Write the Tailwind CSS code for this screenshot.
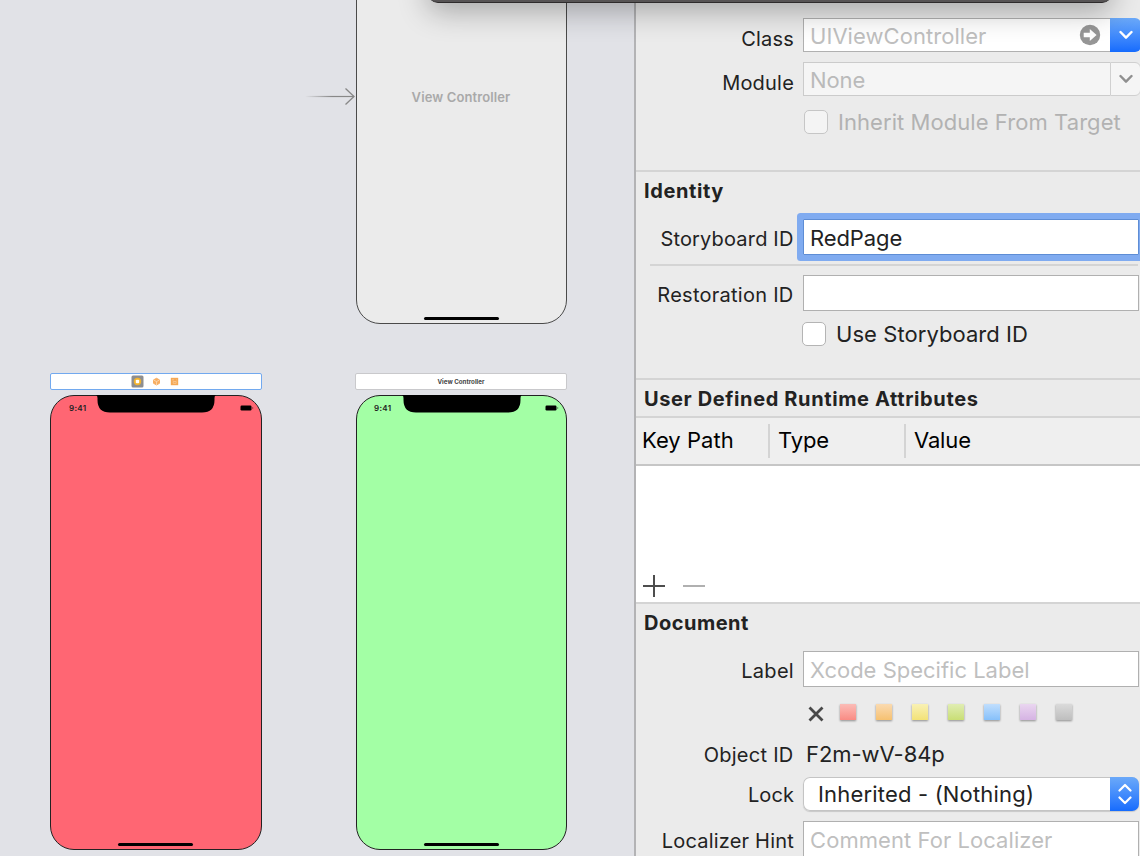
<!DOCTYPE html>
<html lang="en">
<head>
<meta charset="utf-8">
<title>Storyboard Editor</title>
<script src="https://cdn.jsdelivr.net/npm/@tailwindcss/browser@4"></script>
</head>
<body class="font-['Inter','Liberation_Sans',sans-serif] text-[#222222]">
<div class="relative flex h-[856px] w-[1140px] overflow-hidden bg-[#e1e2e7]">

  <!-- Storyboard canvas -->
  <main class="relative h-full w-[634px] shrink-0 overflow-hidden">
    <!-- Entry point arrow -->
    <svg class="absolute left-[304px] top-[86px]" width="54" height="22" viewBox="0 0 54 22" fill="none">
      <defs><linearGradient id="fade" x1="0" x2="1" y1="0" y2="0"><stop offset="0" stop-color="#888" stop-opacity="0"/><stop offset=".55" stop-color="#888"/></linearGradient></defs>
      <rect x="1" y="9.900" width="49" height="1.200" fill="url(#fade)"/>
      <path d="M41.500 2.500 50 10.500 41.500 18.500" stroke="#888" stroke-width="1.300"/>
    </svg>

    <!-- Initial scene -->
    <section class="absolute left-[356px] top-[-131px] flex h-[455px] w-[211px] flex-col items-center justify-between rounded-[24px] border border-[#4a4a4a] bg-[#ebebeb] pb-[3px]">
      <p class="mt-[218px] -ml-px text-[13px] font-semibold leading-[18px] tracking-[0.12px] text-[#a9a9a9]">View Controller</p>
      <div class="h-[3px] w-[75px] rounded-full bg-black"></div>
    </section>

    <!-- Red scene, selected -->
    <div class="absolute left-[50px] top-[373px] flex h-[17px] w-[212px] items-center justify-center gap-[5.500px] rounded-[2px] border border-[#72a9ef] bg-white">
      <svg width="13" height="13" viewBox="0 0 13 13"><rect x=".5" y=".5" width="12" height="12" rx="1.500" fill="#8d8e90"/><circle cx="6.500" cy="6.500" r="3.700" fill="#f3b32b"/><rect x="4.800" y="4.800" width="3.400" height="3.400" rx=".8" fill="#fff"/></svg>
      <svg width="13" height="13" viewBox="0 0 13 13"><path d="M6.500 3.300 9.500 4.900V8.300L6.500 9.900 3.500 8.300V4.900Z" fill="#f8ae62" stroke="#f8ae62" stroke-linejoin="round"/><path d="M3.600 5 6.500 6.600 9.400 5M6.500 6.600V10" fill="none" stroke="#fde3c4" stroke-width=".7"/></svg>
      <svg width="13" height="13" viewBox="0 0 13 13"><rect x="2.800" y="2.800" width="7.400" height="7.400" fill="#f6a956"/><path d="M4 4.800H6M8.300 4.800H9M5.200 6.500H8.200V8.300H5.200Z" fill="none" stroke="#fbd0a0" stroke-width=".7"/></svg>
    </div>
    <section class="absolute left-[50px] top-[395px] flex h-[455px] w-[211.500px] flex-col items-center justify-between rounded-[24px] border border-[#222] bg-[#ff6673] pb-[3px]">
      <header class="flex w-full items-start pl-[18px] pr-[7px]">
        <span class="mt-[7px] w-[27px] text-[8px] font-semibold leading-[11px] tracking-[0.350px]">9:41</span>
        <svg class="-mt-px" width="120" height="18" viewBox="0 0 120 18"><path d="M0 0H120Q118.500 .5 118.500 3V5Q118.500 17.500 106 17.500H14Q1.500 17.500 1.500 5V3Q1.500 .5 0 0Z" fill="#000"/></svg>
        <svg class="mt-[8px] ml-auto" width="28" height="8" viewBox="0 0 28 8"><rect x="14.500" y="1.500" width="11" height="5" rx="1.200" fill="#000"/><rect x="26.200" y="3" width="1" height="2" fill="#000" opacity=".4"/></svg>
      </header>
      <div class="-ml-px h-[3px] w-[75px] rounded-full bg-black"></div>
    </section>

    <!-- Green scene -->
    <div class="absolute left-[355px] top-[373px] flex h-[17px] w-[212px] items-center justify-center rounded-[2px] border border-[#c9c9cc] bg-white">
      <p class="text-[6.2px] font-bold leading-[8px] tracking-[0.020px] text-[#444]">View Controller</p>
    </div>
    <section class="absolute left-[356px] top-[395px] flex h-[455px] w-[211px] flex-col items-center justify-between rounded-[24px] border border-[#222] bg-[#a3ffa5] pb-[3px]">
      <header class="flex w-full items-start pl-[17px] pr-[7px]">
        <span class="mt-[7px] w-[28px] text-[8px] font-semibold leading-[11px] tracking-[0.350px]">9:41</span>
        <svg class="-mt-px" width="120" height="18" viewBox="0 0 120 18"><path d="M0 0H120Q118.500 .5 118.500 3V5Q118.500 17.500 106 17.500H14Q1.500 17.500 1.500 5V3Q1.500 .5 0 0Z" fill="#000"/></svg>
        <svg class="mt-[8px] ml-auto" width="28" height="8" viewBox="0 0 28 8"><rect x="14.500" y="1.500" width="11" height="5" rx="1.200" fill="#000"/><rect x="26.200" y="3" width="1" height="2" fill="#000" opacity=".4"/></svg>
      </header>
      <div class="h-[3px] w-[75px] rounded-full bg-black"></div>
    </section>
  </main>

  <!-- Identity inspector -->
  <aside class="flex h-full w-[506px] shrink-0 flex-col border-l-2 border-[#b3b3b5] bg-[#ebebeb] text-[22px] leading-[26px]">

    <!-- Custom class -->
    <section class="flex h-[170px] shrink-0 flex-col pt-[18px]">
      <div class="flex h-[34px] gap-[9px]">
        <label class="flex w-[158px] shrink-0 items-center justify-end pt-[7px] text-[20px] tracking-[0.2px]">Class</label>
        <div class="flex w-[307px] shrink-0 items-center justify-between border border-r-0 border-[#b0b0b0] bg-white pl-[6px] pr-[9px] text-[#bfbfbf]">
          <span class="pt-[2px] tracking-[0.05px]">UIViewController</span>
          <svg width="22" height="22" viewBox="0 0 22 22"><circle cx="11" cy="11" r="10.200" fill="#969696"/><path d="M4.700 8.800H10.800V4.900L17.600 11 10.800 17.100V13.200H4.700Z" fill="#fff"/></svg>
        </div>
        <div class="-ml-[9px] flex w-[31px] shrink-0 items-center justify-center rounded-r-[6px] bg-linear-to-b from-[#6ba9f9] to-[#156bfd]">
          <svg width="14" height="10" viewBox="0 0 14 10"><path d="M1.500 2 7 7.700 12.500 2" fill="none" stroke="#fff" stroke-width="2.400" stroke-linecap="round" stroke-linejoin="round"/></svg>
        </div>
      </div>
      <div class="mt-[10px] flex h-[34px] gap-[9px]">
        <label class="flex w-[158px] shrink-0 items-center justify-end pt-[7px] text-[20px] tracking-[0.2px]">Module</label>
        <div class="flex w-[307px] shrink-0 items-center border border-r-0 border-[#cbcbcb] bg-[#f5f5f5] pl-[6px] text-[#bababa]">
          <span class="pt-[2px] tracking-[-0.1px]">None</span>
        </div>
        <div class="-ml-[9px] flex w-[31px] shrink-0 items-center justify-center rounded-r-[6px] border border-[#d0d0d0] bg-[#f5f5f5]">
          <svg width="14" height="10" viewBox="0 0 14 10"><path d="M1.500 2 7 7.700 12.500 2" fill="none" stroke="#8f8f8f" stroke-width="2.400" stroke-linecap="round" stroke-linejoin="round"/></svg>
        </div>
      </div>
      <div class="mt-[14px] flex h-[24px] items-center gap-[10px] pl-[168px] text-[#b2b2b2]">
        <span class="size-[24px] shrink-0 rounded-[5px] border border-[#c6c6c6] bg-[#f4f4f4]"></span>
        <span class="tracking-[0.06px] whitespace-nowrap">Inherit Module From Target</span>
      </div>
    </section>

    <!-- Identity -->
    <section class="flex h-[208px] shrink-0 flex-col border-t-2 border-[#d4d4d4]">
      <h2 class="mt-[6px] pl-[8px] text-[20px] font-bold leading-[26px] tracking-[0.6px]">Identity</h2>
      <div class="mt-[15px] flex h-[36px] gap-[9px]">
        <label class="flex w-[158px] shrink-0 items-center justify-end pt-[3px] pr-[0.500px] text-[20px] tracking-[0.17px]">Storyboard ID</label>
        <div class="flex w-[336px] items-center rounded-[1px] border border-[#5e8dd5] bg-white pl-[6px] ring-6 ring-[#80abf0]">
          <span class="pt-[2px] tracking-[-0.1px]">RedPage</span>
        </div>
      </div>
      <div class="mt-[9px] ml-[14px] h-[2px] w-[488px] bg-[#d4d4d4]"></div>
      <div class="mt-[9px] flex h-[36px] gap-[9px]">
        <label class="flex w-[158px] shrink-0 items-center justify-end pt-[3px] pr-[0.500px] text-[20px] tracking-[0.26px]">Restoration ID</label>
        <div class="w-[336px] border border-[#b0b0b0] bg-white"></div>
      </div>
      <div class="mt-[11px] flex h-[24px] items-center gap-[10px] pl-[166px]">
        <span class="size-[24px] rounded-[5px] border border-[#b4b4b4] bg-white"></span>
        <span class="tracking-[0.06px]">Use Storyboard ID</span>
      </div>
    </section>

    <!-- Runtime attributes -->
    <section class="flex h-[224px] shrink-0 flex-col border-t-2 border-[#d4d4d4]">
      <h2 class="flex h-[36px] items-center pl-[8px] pt-[2px] text-[20px] font-bold tracking-[0.62px]">User Defined Runtime Attributes</h2>
      <div class="flex h-[50px] items-center border-y-2 border-t-[#d4d4d4] border-b-[#c6c6c6] bg-[#efefef] text-black">
        <span class="w-[132px] pb-[2px] pl-[6px] tracking-[0.03px]">Key Path</span>
        <span class="flex h-[34px] w-[136px] items-center border-l-2 border-[#d4d4d4] pb-[2px] pl-[8px] tracking-[-0.15px]">Type</span>
        <span class="flex h-[34px] items-center border-l-2 border-[#d4d4d4] pb-[2px] pl-[8px] tracking-[-0.15px]">Value</span>
      </div>
      <div class="flex flex-1 items-end gap-[18px] bg-white pb-[5px] pl-[7px]">
        <svg width="22" height="22" viewBox="0 0 22 22"><path d="M10 0H12V10H22V12H12V22H10V12H0V10H10Z" fill="#4d4d4d"/></svg>
        <svg width="22" height="22" viewBox="0 0 22 22"><path d="M0 10H22V12H0Z" fill="#b0b0b0"/></svg>
      </div>
    </section>

    <!-- Document -->
    <section class="flex h-[270px] shrink-0 flex-col border-t-2 border-[#d4d4d4]">
      <h2 class="mt-[6px] pl-[8px] text-[20px] font-bold leading-[26px] tracking-[0.5px]">Document</h2>
      <div class="mt-[15px] flex h-[36px] gap-[9px]">
        <label class="flex w-[158px] items-center justify-end pt-[3px] text-[20px] tracking-[0.3px]">Label</label>
        <div class="flex w-[336px] items-center border border-[#b0b0b0] bg-white pl-[6px] text-[#bfbfbf]"><span class="pt-[2px]">Xcode Specific Label</span></div>
      </div>
      <div class="mt-[16px] flex h-[20px] items-start gap-[20px] pl-[172px]">
        <svg class="mt-[3px] -mr-[4px]" width="16" height="16" viewBox="0 0 16 16"><path d="M1.500 1.500 14.500 14.500M14.500 1.500 1.500 14.500" stroke="#484848" stroke-width="2.800"/></svg>
        <span class="mt-px size-[16px] bg-linear-to-b from-[#fbbcb7] to-[#f98b84] shadow-[0_1px_2px_rgba(0,0,0,.4)]"></span>
        <span class="mt-px size-[16px] bg-linear-to-b from-[#fadab0] to-[#f6c170] shadow-[0_1px_2px_rgba(0,0,0,.4)]"></span>
        <span class="mt-px size-[16px] bg-linear-to-b from-[#f9f1b4] to-[#f3e276] shadow-[0_1px_2px_rgba(0,0,0,.4)]"></span>
        <span class="mt-px size-[16px] bg-linear-to-b from-[#e0edb2] to-[#c9de74] shadow-[0_1px_2px_rgba(0,0,0,.4)]"></span>
        <span class="mt-px size-[16px] bg-linear-to-b from-[#c0defd] to-[#86c0fa] shadow-[0_1px_2px_rgba(0,0,0,.4)]"></span>
        <span class="mt-px size-[16px] bg-linear-to-b from-[#ead6f0] to-[#d5b3e3] shadow-[0_1px_2px_rgba(0,0,0,.4)]"></span>
        <span class="mt-px size-[16px] bg-linear-to-b from-[#dadada] to-[#bebebe] shadow-[0_1px_2px_rgba(0,0,0,.4)]"></span>
      </div>
      <div class="mt-[19px] flex h-[24px] items-center">
        <label class="w-[158px] pt-px pr-[0.500px] text-right text-[20px] tracking-[0.26px]">Object ID</label>
        <span class="pl-[12px] tracking-[-0.05px]">F2m-wV-84p</span>
      </div>
      <div class="mt-[11px] flex h-[34px] gap-[9px]">
        <label class="flex w-[158px] items-center justify-end pt-px text-[20px] tracking-[0.1px]">Lock</label>
        <div class="flex w-[336px] items-stretch overflow-hidden rounded-[7px] bg-white shadow-[inset_0_0_0_1px_#c4c4c4,0_1px_1px_rgba(0,0,0,.15)]">
          <span class="flex flex-1 items-center pl-[15px] tracking-[0.18px]">Inherited - (Nothing)</span>
          <span class="flex w-[29px] items-center justify-center bg-linear-to-b from-[#6ba9f9] to-[#156bfd]">
            <svg width="14" height="22" viewBox="0 0 14 22"><path d="M1.500 7.500 7 2 12.500 7.500M1.500 14.500 7 20 12.500 14.500" fill="none" stroke="#fff" stroke-width="2.200" stroke-linecap="round" stroke-linejoin="round"/></svg>
          </span>
        </div>
      </div>
      <div class="mt-[10px] flex h-[36px] shrink-0 gap-[9px]">
        <label class="flex w-[158px] items-center justify-end pt-[3px] text-[20px] tracking-[0.2px]">Localizer Hint</label>
        <div class="flex w-[336px] items-center border border-[#b0b0b0] bg-white pl-[6px] text-[#bfbfbf]"><span class="pt-[2px] tracking-[0.06px]">Comment For Localizer</span></div>
      </div>
    </section>
  </aside>

  <!-- Bottom edge of the floating library window -->
  <div class="absolute left-[428px] top-[-37px] h-[40px] w-[684px] rounded-[10px] border-b border-[#2e2b2c] bg-[#575455] shadow-[0_8px_30px_rgba(0,0,0,.3)]"></div>
</div>
</body>
</html>
